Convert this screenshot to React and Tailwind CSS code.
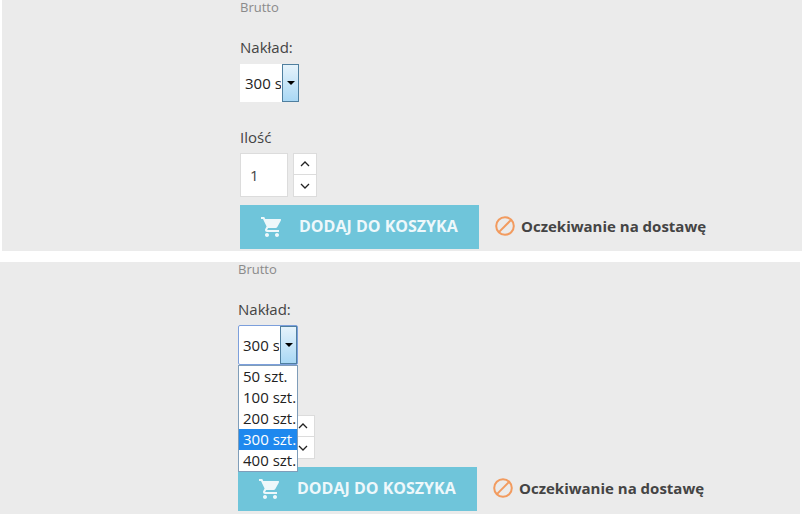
import React from "react";

function CartIcon() {
  return (
    <svg width="24" height="24" viewBox="0 0 24 24" fill="#eef8fb">
      <path d="M7 18c-1.1 0-1.99.9-1.99 2S5.9 22 7 22s2-.9 2-2-.9-2-2-2zM1 2v2h2l3.6 7.59-1.35 2.45c-.16.28-.25.61-.25.96 0 1.1.9 2 2 2h12v-2H7.42c-.14 0-.25-.11-.25-.25l.03-.12.9-1.63h7.45c.75 0 1.41-.41 1.75-1.03l3.58-6.49A1 1 0 0 0 20 4H5.21l-.94-2H1zm16 16c-1.1 0-1.99.9-1.99 2s.89 2 1.99 2 2-.9 2-2-.9-2-2-2z" />
    </svg>
  );
}

function BanIcon() {
  return (
    <svg width="20" height="20" viewBox="0 0 20 20" fill="none" stroke="#f29b5f" strokeWidth="2">
      <circle cx="10" cy="10" r="8.8" />
      <path d="M3.9 16.1 16.1 3.9" />
    </svg>
  );
}

function Chevron({ up }) {
  return (
    <svg width="10" height="6" viewBox="0 0 10 6" fill="none" stroke="#222" strokeWidth="1.3">
      <path d={up ? "M1 5 5 1l4 4" : "M1 1l4 4 4-4"} />
    </svg>
  );
}

function Panel({ open, className }) {
  const options = ["50 szt.", "100 szt.", "200 szt.", "300 szt.", "400 szt."];
  return (
    <div className={`h-[252px] bg-[#ebebeb] pl-[238px] text-[#444] ${className}`}>
      <div className="h-[38px] text-[13px] leading-[15px] text-[#8a8a8a]">Brutto</div>
      <div className="h-[26px] text-[15px] leading-[19px]">Nakład:</div>
      <div className="relative h-[38px] w-[59px]">
        {open && <div className="absolute -top-px left-0 h-[40px] w-[60px] rounded-[2px] border border-[#7c9fdc]" />}
        <div className="flex h-[38px] w-[59px] items-stretch bg-white">
          <div className="mr-px flex-1 overflow-hidden whitespace-nowrap pl-[5px] text-[15px] leading-[39px] text-[#222]">
            300 szt.
          </div>
          <div className="relative flex w-[17px] shrink-0 items-center justify-center border border-[#4f7f9f] bg-gradient-to-b from-[#e6f3fb] to-[#a9d8f5]">
            <div className="h-0 w-0 border-x-[4px] border-t-[4px] border-x-transparent border-t-black" />
          </div>
        </div>
        {open && (
          <div className="absolute left-0 top-[39px] z-10 w-[60px] border border-[#7f9db9] bg-white text-[15px] leading-[21px] text-[#222]">
            {options.map((o) => (
              <div key={o} className={`whitespace-nowrap pl-[4px] ${o === "300 szt." ? "bg-[#1e88ee] text-white" : ""}`}>
                {o}
              </div>
            ))}
          </div>
        )}
      </div>
      <div className="mt-[25px] h-[26px] text-[15px] leading-[21px]">Ilość</div>
      <div className="flex h-[44px] gap-[5px]">
        <div className="flex h-[44px] w-[48px] items-center border border-[#dcdcdc] bg-white pl-[9px] text-[15px]">1</div>
        <div className="flex w-[24px] flex-col">
          <div className="flex h-[22px] items-center justify-center border border-[#dcdcdc] bg-white"><Chevron up /></div>
          <div className="flex h-[22px] items-center justify-center border border-t-0 border-[#dcdcdc] bg-white"><Chevron /></div>
        </div>
      </div>
      <div className="mt-[8px] flex h-[44px] items-center">
        <div className="flex h-[44px] w-[239px] items-center bg-[#6fc5da] pl-[20px] text-[16px] font-bold text-[#eef8fb]">
          <CartIcon />
          <span className="ml-[15px] -translate-y-px">DODAJ DO KOSZYKA</span>
        </div>
        <div className="ml-[16px] -translate-y-px"><BanIcon /></div>
        <span className="ml-[6px] -translate-y-px text-[15px] font-bold text-[#444]">Oczekiwanie na dostawę</span>
      </div>
    </div>
  );
}

export default function App() {
  return (
    <div className="h-[514px] w-[802px] overflow-hidden bg-white" style={{ fontFamily: '"Open Sans", sans-serif' }}>
      <Panel className="ml-[2px] !h-[251px]" />
      <div className="h-[11px]" />
      <Panel open className="mr-[2px]" />
    </div>
  );
}
